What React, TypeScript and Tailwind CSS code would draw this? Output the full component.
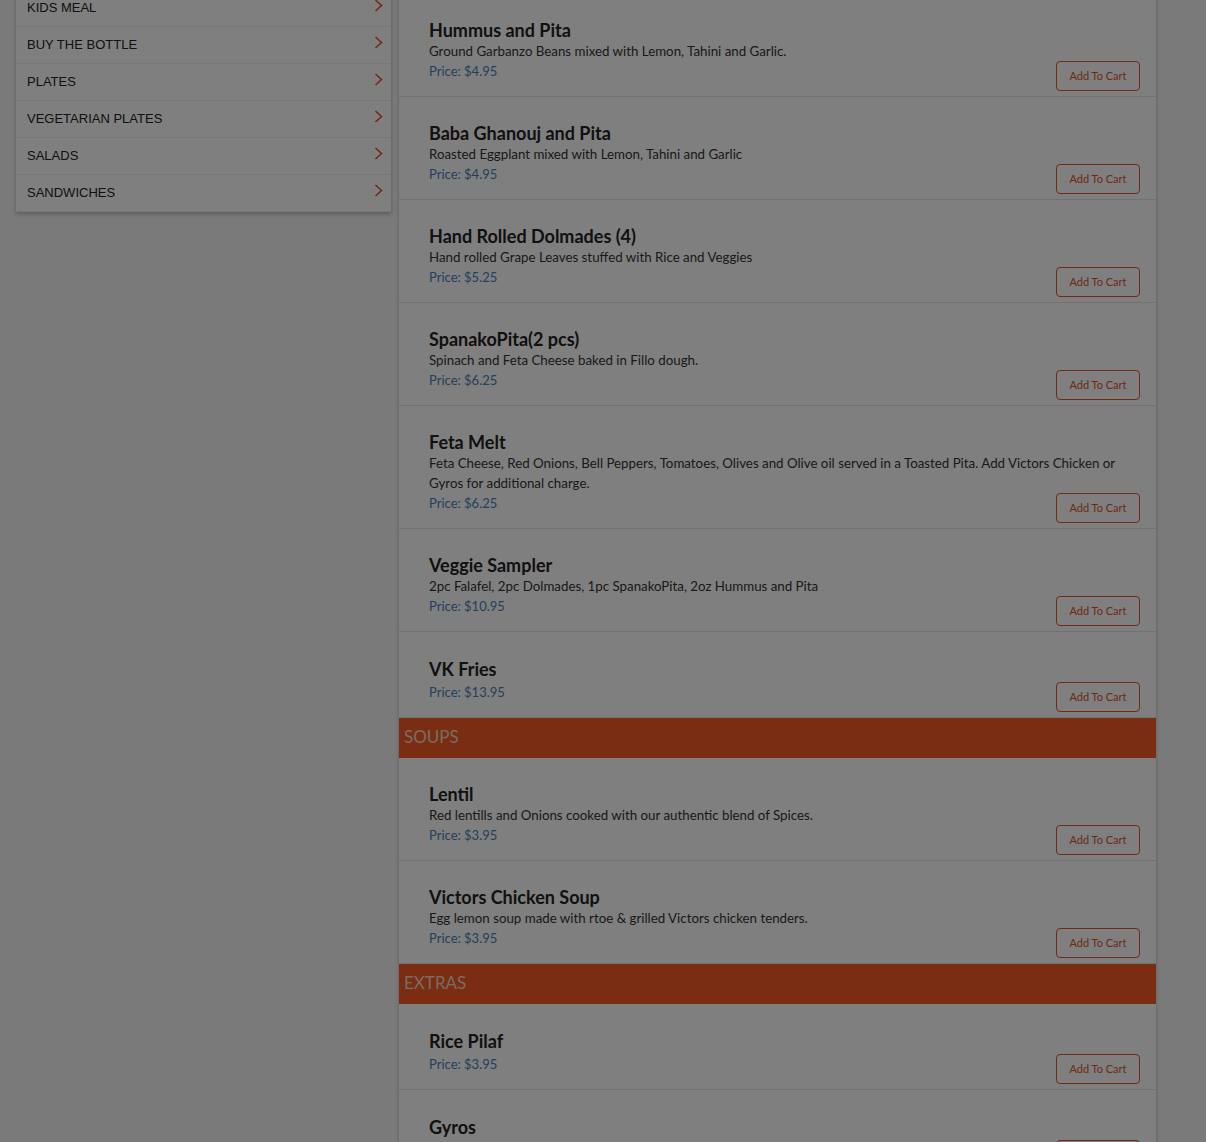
import React from 'react';

type MenuItem = {
  name: string;
  description?: string;
  price: string;
};

type Section = {
  title?: string;
  items: MenuItem[];
};

const categories = ['KIDS MEAL', 'BUY THE BOTTLE', 'PLATES', 'VEGETARIAN PLATES', 'SALADS', 'SANDWICHES'];

const sections: Section[] = [
  {
    items: [
      { name: 'Hummus and Pita', description: 'Ground Garbanzo Beans mixed with Lemon, Tahini and Garlic.', price: '$4.95' },
      { name: 'Baba Ghanouj and Pita', description: 'Roasted Eggplant mixed with Lemon, Tahini and Garlic', price: '$4.95' },
      { name: 'Hand Rolled Dolmades (4)', description: 'Hand rolled Grape Leaves stuffed with Rice and Veggies', price: '$5.25' },
      { name: 'SpanakoPita(2 pcs)', description: 'Spinach and Feta Cheese baked in Fillo dough.', price: '$6.25' },
      {
        name: 'Feta Melt',
        description:
          'Feta Cheese, Red Onions, Bell Peppers, Tomatoes, Olives and Olive oil served in a Toasted Pita. Add Victors Chicken or Gyros for additional charge.',
        price: '$6.25',
      },
      { name: 'Veggie Sampler', description: '2pc Falafel, 2pc Dolmades, 1pc SpanakoPita, 2oz Hummus and Pita', price: '$10.95' },
      { name: 'VK Fries', price: '$13.95' },
    ],
  },
  {
    title: 'SOUPS',
    items: [
      { name: 'Lentil', description: 'Red lentills and Onions cooked with our authentic blend of Spices.', price: '$3.95' },
      { name: 'Victors Chicken Soup', description: 'Egg lemon soup made with rtoe & grilled Victors chicken tenders.', price: '$3.95' },
    ],
  },
  {
    title: 'EXTRAS',
    items: [
      { name: 'Rice Pilaf', price: '$3.95' },
      { name: 'Gyros', price: '$4.95' },
    ],
  },
];

function Chevron() {
  return (
    <svg width="9" height="13" viewBox="0 0 9 13" fill="none" className="-mt-[6px]">
      <polyline points="1.5,1 7.5,6.5 1.5,12" stroke="#e0542a" strokeWidth="1.6" />
    </svg>
  );
}

function MenuRow({ item }: { item: MenuItem }) {
  return (
    <div className={item.description ? 'border-b border-[#e3e3e3] pl-[30px] pr-4 pt-[25px] pb-[5px]' : 'border-b border-[#e3e3e3] pl-[30px] pr-4 pt-[26px] pb-[5px]'}>
      <h3 className="text-[18px] leading-[22px] font-bold text-[#222]">{item.name}</h3>
      {item.description && <p className="text-[13.3px] leading-[20px] text-[#333]">{item.description}</p>}
      <div className={item.description ? 'flex items-start justify-between' : 'mt-[2px] flex items-start justify-between'}>
        <p className="text-[13px] leading-[20px] text-[#4a80b8]">Price: {item.price}</p>
        <button className="h-[30px] w-[84px] shrink-0 rounded-[4px] border border-[#e0542a] text-[11px] text-[#d9532c]">
          Add To Cart
        </button>
      </div>
    </div>
  );
}

export default function App() {
  return (
    <div className="relative h-[1142px] overflow-hidden bg-[#f4f4f4]">
      <div className="flex items-start gap-[7px] pl-4">
        {/* category list */}
        <aside className="-mt-[10px] w-[375px] bg-white shadow-[0_2px_4px_rgba(0,0,0,0.25)] font-['Liberation_Sans',Arial,sans-serif]">
          {categories.map((cat) => (
            <div
              key={cat}
              className="flex h-[37px] items-center justify-between border-b border-[#eeeeee] pl-[11px] pr-[8px] text-[13px] text-[#222]"
            >
              <span>{cat}</span>
              <Chevron />
            </div>
          ))}
        </aside>

        {/* menu items */}
        <main className="-mt-[7px] w-[759px] border-x border-t border-[#dcdcdc] bg-white font-['Lato','Noto_Sans',sans-serif] shadow-[0_0_3px_rgba(0,0,0,0.15)]">
          {sections.map((section, i) => (
            <div key={i}>
              {section.title && (
                <div className="flex h-[40px] items-center bg-[#f45a24] px-[5px] pb-[2px] text-[17px] text-[#f5d6c8]">
                  {section.title}
                </div>
              )}
              {section.items.map((item) => (
                <MenuRow key={item.name} item={item} />
              ))}
            </div>
          ))}
        </main>
      </div>

      {/* modal backdrop */}
      <div className="fixed inset-0 bg-black/50" />
    </div>
  );
}
